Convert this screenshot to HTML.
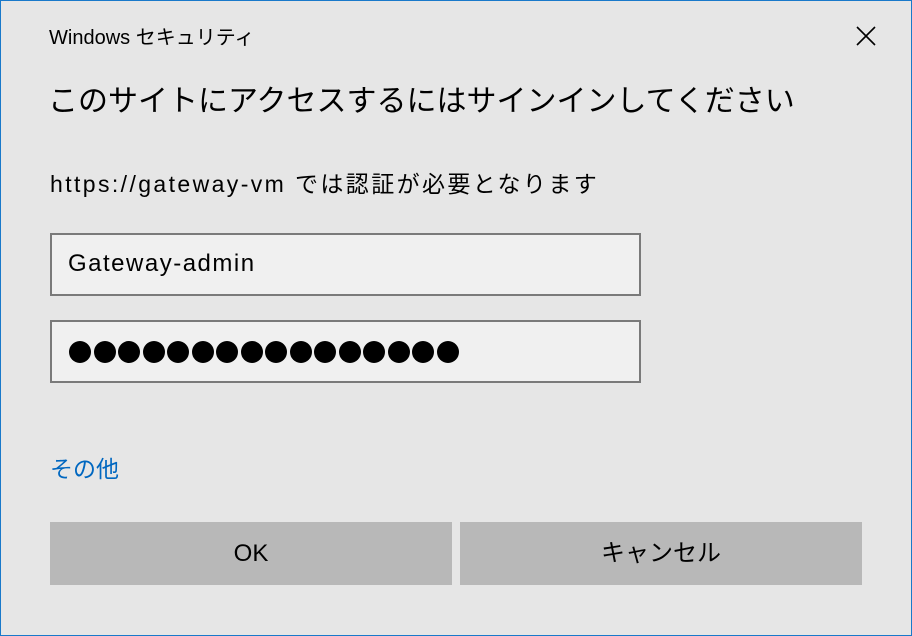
<!DOCTYPE html>
<html><head><meta charset="utf-8"><style>
html,body{margin:0;padding:0}
body{width:912px;height:636px;position:relative;overflow:hidden;background:#e6e6e6;font-family:"Liberation Sans","Noto Sans CJK JP",sans-serif;color:#000}
.frame{position:absolute;left:0;top:0;width:910px;height:634px;border:1px solid #1979ca}
.t{position:absolute;white-space:nowrap}
.inp{position:absolute;left:50px;width:587px;height:59px;border:2px solid #7a7a7a;background:#f0f0f0}
.btn{position:absolute;top:522px;height:63px;background:#b8b8b8;font-size:24px;text-align:center;line-height:63px}
.d{position:absolute;top:19px;width:22px;height:22px;border-radius:50%;background:#000}
</style></head><body>
<div class="frame"></div>
<div class="t" style="left:49px;top:21px;font-size:20px">Windows セキュリティ</div>
<svg style="position:absolute;left:856px;top:26px" width="20" height="20"><path d="M1 1L19 19M19 1L1 19" stroke="#000" stroke-width="1.6"/></svg>
<div class="t" style="left:48px;top:76px;font-size:30px">このサイトにアクセスするにはサインインしてください</div>
<div class="t" style="left:50px;top:165px;font-size:23px;letter-spacing:2.4px">https://gateway-vm では認証が必要となります</div>
<div class="inp" style="top:233px"><div class="t" style="left:16px;top:15px;font-size:24px;letter-spacing:1.5px">Gateway-admin</div></div>
<div class="inp" style="top:320px">
<div class="d" style="left:17px"></div><div class="d" style="left:41.5px"></div><div class="d" style="left:66px"></div><div class="d" style="left:90.5px"></div>
<div class="d" style="left:115px"></div><div class="d" style="left:139.5px"></div><div class="d" style="left:164px"></div><div class="d" style="left:188.5px"></div>
<div class="d" style="left:213px"></div><div class="d" style="left:237.5px"></div><div class="d" style="left:262px"></div><div class="d" style="left:286.5px"></div>
<div class="d" style="left:311px"></div><div class="d" style="left:335.5px"></div><div class="d" style="left:360px"></div><div class="d" style="left:384.5px"></div>
</div>
<div class="t" style="left:50px;top:450px;font-size:23px;color:#0067c0">その他</div>
<div class="btn" style="left:50px;width:402px">OK</div>
<div class="btn" style="left:460px;width:402px">キャンセル</div>
</body></html>
